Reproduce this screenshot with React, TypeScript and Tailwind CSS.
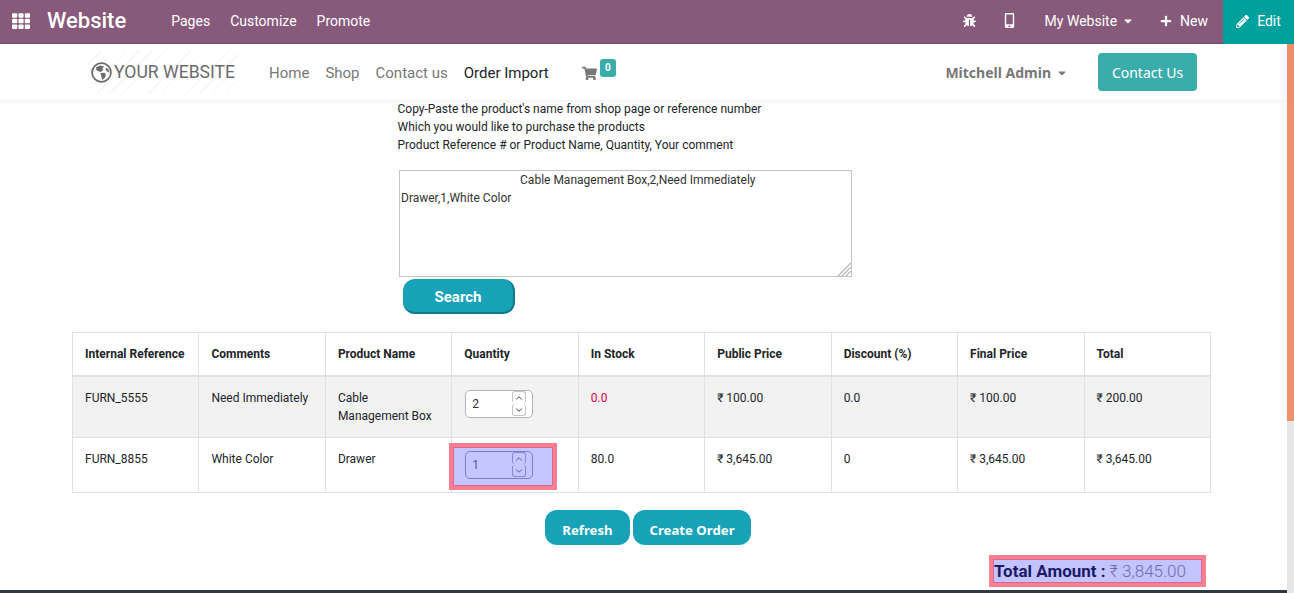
import { ChevronDown, ChevronUp } from 'lucide-react'
import { FaBug, FaCaretDown, FaMobileAlt, FaPencilAlt, FaPlus, FaShoppingCart, FaTh } from 'react-icons/fa'

const columns = ['Internal Reference', 'Comments', 'Product Name', 'Quantity', 'In Stock', 'Public Price', 'Discount (%)', 'Final Price', 'Total']

function QtyInput({ value, dim }: { value: string; dim?: boolean }) {
    return (
        <div className={`ml-[1px] mt-[1px] flex h-[28px] w-[68px] items-center justify-between rounded-[5px] border pl-[6px] pr-[6px] ${dim ? 'border-[#7c7cb0] text-[#2f2f8c]' : 'border-[#b4b4b4] bg-white text-[#333]'}`}>
            <span>{value}</span>
            <div className="flex flex-col gap-[1px]">
                <span className={`flex h-[12px] w-[14px] items-center justify-center rounded-[3px] border-x border-t ${dim ? 'border-[#8f8fc4]' : 'border-[#c4c4c4]'}`}>
                    <ChevronUp size={10} strokeWidth={2.4} className={dim ? 'text-[#3f3f70]' : 'text-[#444]'} />
                </span>
                <span className={`flex h-[12px] w-[14px] items-center justify-center rounded-[3px] border-x border-b ${dim ? 'border-[#8f8fc4]' : 'border-[#c4c4c4]'}`}>
                    <ChevronDown size={10} strokeWidth={2.4} className={dim ? 'text-[#3f3f70]' : 'text-[#444]'} />
                </span>
            </div>
        </div>
    )
}

function Cell({ children, className }: { children?: React.ReactNode; className?: string }) {
    return <td className={`border border-[#dee2e6] px-3 py-3 align-top ${className ?? ''}`}>{children}</td>
}

function GlobeLogo() {
    return (
        <svg width="21" height="21" viewBox="0 0 21 21" className="shrink-0">
            <circle cx="10.5" cy="10.5" r="9.4" fill="none" stroke="#6b6b6b" strokeWidth="1.8" />
            <path d="M5 5.2 9.6 3.4 13 4.4 11.4 6.6 12 8.4 9.4 10 7.6 9.2 5.4 8.2Z" fill="#6b6b6b" />
            <path d="M9.4 11 13.4 10.8 15 12.4 13.8 15.8 11.6 18 10.6 15.4Z" fill="#6b6b6b" />
            <path d="M15 5.4 17.4 7.4 18.2 10.4 16 9.4 14.6 7.4Z" fill="#6b6b6b" />
        </svg>
    )
}

export default function App() {
    return (
        <div className="relative flex h-[593px] w-[1294px] flex-col overflow-hidden bg-white font-['Roboto',sans-serif] text-[12px] leading-[18px] text-[#212529]">
            {/* odoo top bar */}
            <header className="flex h-[44px] shrink-0 items-center border-b border-[#6f4a66] bg-[#875a7b] text-white">
                <FaTh size={18} className="mb-[2px] ml-[12px]" />
                <span className="mb-[2px] ml-[17px] text-[22px] font-medium">Website</span>
                <nav className="mb-[2px] ml-[45px] flex items-center gap-[20px] text-[14px]">
                    <span>Pages</span>
                    <span>Customize</span>
                    <span>Promote</span>
                </nav>
                <div className="ml-auto flex h-full items-center text-[14px]">
                    <FaBug size={13} className="mb-[2px]" />
                    <FaMobileAlt size={15} className="mb-[2px] ml-[26px]" />
                    <span className="mb-[2px] ml-[28px] flex items-center gap-[5px]">
                        My Website <FaCaretDown size={12} />
                    </span>
                    <span className="mb-[2px] ml-[26px] flex items-center gap-[8px]">
                        <FaPlus size={12} /> New
                    </span>
                    <span className="ml-[15px] flex h-[44px] w-[71px] items-center justify-center gap-[8px] self-start bg-[#00a09d] pb-[2px]">
                        <FaPencilAlt size={13} /> Edit
                    </span>
                </div>
            </header>

            <div className="flex min-h-0 flex-1">
                <main className="relative min-w-0 flex-1">
                    {/* website navbar */}
                    <div className="flex h-[56px] items-center bg-white pl-[88px] shadow-[0_2px_4px_rgba(0,0,0,0.06)]">
                        <div className="flex h-[42px] w-[150px] items-center bg-[repeating-linear-gradient(135deg,#f5f5f5_0,#f5f5f5_1px,transparent_1px,transparent_9px)] pl-[3px] text-[#6b6b6b]">
                            <GlobeLogo />
                            <span className="ml-[2px] whitespace-nowrap text-[17.6px]">YOUR WEBSITE</span>
                        </div>
                        <nav className="ml-[31px] mt-[2px] flex items-center gap-[16px] text-[15px] text-[#777]">
                            <span>Home</span>
                            <span>Shop</span>
                            <span>Contact us</span>
                            <span className="text-[#212529]">Order Import</span>
                        </nav>
                        <div className="relative ml-[33px] mt-[2px] text-[#777]">
                            <FaShoppingCart size={15} />
                            <span className="absolute left-[18px] top-[-7px] flex h-[18px] w-[16px] items-center justify-center rounded-[3px] bg-[#3aadaa] text-[10px] font-bold text-white">0</span>
                        </div>
                        <span className="ml-auto mt-[2px] flex items-center gap-[5px] font-['Noto_Sans',sans-serif] text-[14px] font-bold text-[#777]">
                            Mitchell Admin <FaCaretDown size={12} />
                        </span>
                        <button className="ml-[30px] mr-[90px] flex h-[38px] w-[99px] items-center justify-center rounded-[4px] bg-[#3aadaa] pt-[2px] font-['Noto_Sans',sans-serif] text-[14px] text-white">
                            Contact Us
                        </button>
                    </div>

                    {/* import form */}
                    <div className="ml-[397.5px]">
                        <p>Copy-Paste the product's name from shop page or reference number</p>
                        <p>Which you would like to purchase the products</p>
                        <p>Product Reference # or Product Name, Quantity, Your comment</p>
                        <div className="relative ml-[1.5px] mt-[16px] h-[107px] w-[453px]">
                            <textarea
                                readOnly
                                className="block h-full w-full resize-none border border-[#c4c4c4] px-[1px] text-[12px] leading-[18px] text-[#333] outline-none"
                                defaultValue={'                                        Cable Management Box,2,Need Immediately\nDrawer,1,White Color'}
                            />
                            <svg width="14" height="14" viewBox="0 0 14 14" className="absolute bottom-[1px] right-[1px]">
                                <path d="M1 14 14 1M5 14 14 5M9 14 14 9" stroke="#b5b5b5" strokeWidth="1.2" fill="none" />
                            </svg>
                        </div>
                        <button className="ml-[5.5px] mt-[2px] flex h-[35px] w-[112px] items-center justify-center rounded-[12px] border-b-2 border-r-2 border-[#0f7a8c] bg-[#17a2b8] pt-[3px] text-[15px] font-bold text-white">
                            Search
                        </button>
                    </div>

                    {/* result table */}
                    <table className="ml-[72px] mt-[18px] w-[1139px] table-fixed border-collapse">
                        <thead>
                            <tr className="h-[43px] border-b-2 border-[#dee2e6]">
                                {columns.map((c) => (
                                    <th key={c} className="border border-[#dee2e6] px-3 text-left font-bold">{c}</th>
                                ))}
                            </tr>
                        </thead>
                        <tbody>
                            <tr className="h-[60px] bg-[#f2f2f2]">
                                <Cell>FURN_5555</Cell>
                                <Cell>Need Immediately</Cell>
                                <Cell>Cable Management Box</Cell>
                                <Cell><QtyInput value="2" /></Cell>
                                <Cell className="text-[#e6004c]">0.0</Cell>
                                <Cell>₹ 100.00</Cell>
                                <Cell>0.0</Cell>
                                <Cell>₹ 100.00</Cell>
                                <Cell>₹ 200.00</Cell>
                            </tr>
                            <tr className="h-[55px]">
                                <Cell>FURN_8855</Cell>
                                <Cell>White Color</Cell>
                                <Cell>Drawer</Cell>
                                <td className="relative border border-[#dee2e6] px-3 py-3 align-top">
                                    <QtyInput value="1" dim />
                                    {/* highlight over the input */}
                                    <div className="absolute left-[-3px] top-[5px] h-[47px] w-[108px] border-[4px] border-[#fb7f91] bg-[#7f7fff]/45 outline outline-1 -outline-offset-[5px] outline-[#d9688f]" />
                                </td>
                                <Cell>80.0</Cell>
                                <Cell>₹ 3,645.00</Cell>
                                <Cell>0</Cell>
                                <Cell>₹ 3,645.00</Cell>
                                <Cell>₹ 3,645.00</Cell>
                            </tr>
                        </tbody>
                    </table>

                    <div className="ml-[545px] mt-[17px] flex gap-[3px] font-['Noto_Sans',sans-serif] text-[13.2px] font-bold text-white">
                        <button className="h-[35px] w-[85px] rounded-[12px] bg-[#17a2b8] pt-[6px]">Refresh</button>
                        <button className="h-[35px] w-[118px] rounded-[12px] bg-[#17a2b8] pt-[6px]">Create Order</button>
                    </div>

                    <div className="ml-[989px] mt-[10px] flex h-[32px] w-[217px] items-center border-[4px] border-[#fb7f91] bg-[#c3c3ff] pl-[1px] pt-[1px] text-[17px] outline outline-1 -outline-offset-[5px] outline-[#d9688f]">
                        <span className="font-bold text-[#1a1a66]">Total Amount :</span>
                        <span className="ml-[4px] font-light text-[#6c6cae]">₹ 3,845.00</span>
                    </div>

                    <div className="absolute inset-x-0 bottom-0 h-[3px] bg-[#2f3a44]" />
                </main>

                {/* scrollbar */}
                <div className="flex w-[7px] shrink-0 flex-col bg-[#e6e6e6]">
                    <div className="h-[377px] bg-[#f0906a]" />
                </div>
            </div>
        </div>
    )
}
